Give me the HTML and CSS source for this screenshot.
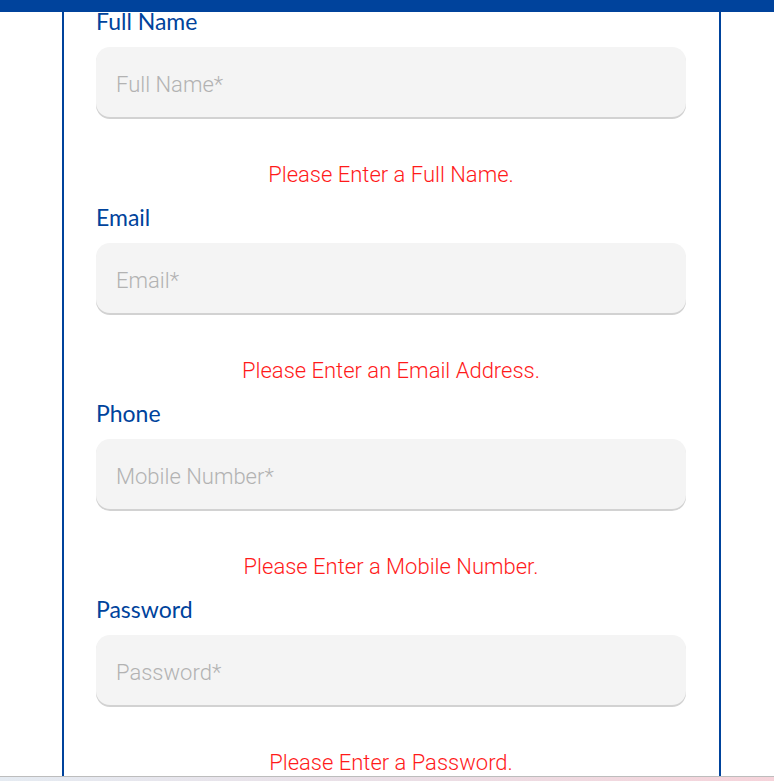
FILE: index.html
```html
<!DOCTYPE html>
<html lang="en">
<head>
<meta charset="utf-8">
<title>Register</title>
<link rel="stylesheet" href="styles.css">
</head>
<body>
<header class="topbar"></header>
<main class="viewport">
  <section class="panel">
    <form class="form">
      <div class="field">
        <label class="label" for="name">Full Name</label>
        <input class="input" id="name" type="text" placeholder="Full Name*">
        <p class="error">Please Enter a Full Name.</p>
      </div>
      <div class="field">
        <label class="label" for="email">Email</label>
        <input class="input" id="email" type="email" placeholder="Email*">
        <p class="error">Please Enter an Email Address.</p>
      </div>
      <div class="field">
        <label class="label" for="phone">Phone</label>
        <input class="input" id="phone" type="tel" placeholder="Mobile Number*">
        <p class="error">Please Enter a Mobile Number.</p>
      </div>
      <div class="field">
        <label class="label" for="password">Password</label>
        <input class="input" id="password" type="password" placeholder="Password*">
        <p class="error">Please Enter a Password.</p>
      </div>
    </form>
  </section>
</main>
<footer class="bottomstrip"></footer>
</body>
</html>
```

FILE: styles.css
```css
html, body {
  margin: 0;
  padding: 0;
  background: #ffffff;
  height: 100%;
  overflow: hidden;
}

.topbar {
  position: fixed;
  top: 0;
  left: 0;
  right: 0;
  height: 12px;
  background: #00439c;
  z-index: 10;
}

.viewport {
  height: 776px;
  overflow: hidden;
}

.panel {
  margin-left: 62px;
  width: 655px;
  height: 100%;
  border-left: 2px solid #00439c;
  border-right: 2px solid #00439c;
  overflow: hidden;
}

.form {
  padding: 7px 33px 0 32px;
  display: flex;
  flex-direction: column;
}

.field {
  display: flex;
  flex-direction: column;
  padding-bottom: 17px;
}

.label {
  font-family: "Lato", "Open Sans", sans-serif;
  font-size: 23px;
  font-weight: 400;
  line-height: 28px;
  color: #00439c;
  margin-bottom: 12px;
}

.input {
  box-sizing: border-box;
  height: 70px;
  width: 100%;
  border: none;
  border-radius: 14px;
  background: #f4f4f4;
  box-shadow: 0 2px 0 #d2d2d2;
  padding: 4px 20px 0;
  font-family: "Roboto", "Liberation Sans", sans-serif;
  font-size: 22px;
  font-weight: 300;
  color: #333;
  outline: none;
}

.input::placeholder {
  color: #b2b2b2;
  font-weight: 300;
}

.error {
  margin: 46px 0 -1px;
  text-align: center;
  font-family: "Roboto", "Liberation Sans", sans-serif;
  font-size: 22px;
  font-weight: 300;
  line-height: 24px;
  color: #ff1a1a;
}

.bottomstrip {
  height: 4px;
  border-top: 1px solid #bdbdbd;
  background: linear-gradient(90deg, #e5ebf2 0%, #eadfe6 50%, #f6d3da 100%);
}
```
